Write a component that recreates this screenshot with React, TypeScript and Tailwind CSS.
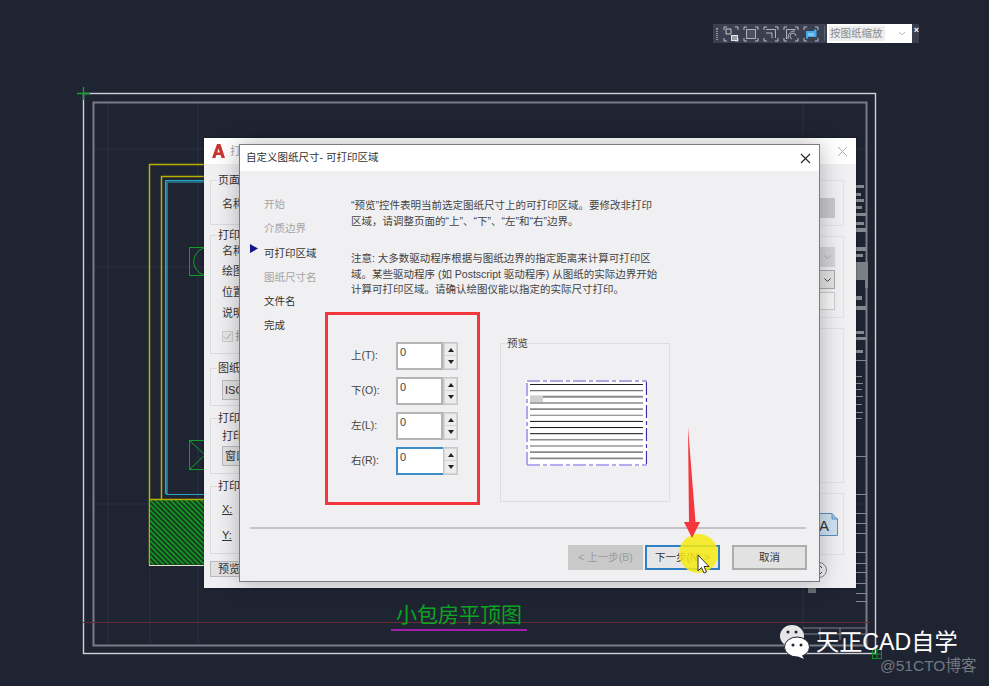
import React from "react";

const NAV = [
  { label: "开始", on: false },
  { label: "介质边界", on: false },
  { label: "可打印区域", on: true, current: true },
  { label: "图纸尺寸名", on: false },
  { label: "文件名", on: true },
  { label: "完成", on: true },
];

const SIDES = [
  { label: "上(T):", focus: false },
  { label: "下(O):", focus: false },
  { label: "左(L):", focus: false },
  { label: "右(R):", focus: true },
];

const PREVIEW_LINES = [
  ["#222", 1], ["#777", 1.4], ["#888", 2], ["#888", 1.6], ["#888", 1.6], ["#777", 1.2], ["#111", 1],
  ["#111", 1], ["#111", 1], ["#555", 1], ["#666", 1.2], ["#888", 1.6], ["#888", 1.8],
] as const;

// bars and ticks on the right hand side of the title block
const SIDE_BARS = [
  [185, 8, 3], [193, 5, 3], [199, 8, 3], [206, 6, 3], [213, 10, 3], [222, 8, 3], [228, 10, 4], [247, 10, 4],
  [254, 7, 3], [296, 6, 4], [306, 10, 4], [331, 8, 3], [337, 10, 3], [350, 7, 3], [360, 10, 1], [376, 6, 1],
  [383, 7, 1], [389, 6, 1], [396, 7, 1], [404, 6, 1], [412, 7, 1], [418, 6, 1], [456, 10, 1], [494, 10, 1],
  [513, 10, 1], [523, 10, 1], [533, 10, 1], [552, 10, 1], [563, 10, 1], [572, 10, 1], [583, 10, 1], [593, 10, 1],
  [601, 10, 1],
];

function CadDrawing() {
  return (
    <svg className="absolute inset-0" width={989} height={686} viewBox="0 0 989 686" fill="none">
      <defs>
        <pattern id="hatch" width="3.6" height="3.6" patternUnits="userSpaceOnUse" patternTransform="rotate(-45)">
          <rect width="3.6" height="3.6" fill="#1a3a22" />
          <rect width="1.8" height="3.6" fill="#119422" />
        </pattern>
      </defs>
      {/* faint grid */}
      <g stroke="#2a3040" strokeWidth="1">
        <path d="M94 149H866M94 267H866M94 504H866" />
        <path d="M198 102V646M108 102V646M150 570V646M803 102V646" />
      </g>
      {/* frames */}
      <rect x="83.5" y="93.5" width="792" height="560" stroke="#cfd1d6" strokeWidth="1.4" />
      <rect x="93.5" y="102.5" width="773" height="543" stroke="#7a7d85" strokeWidth="2" />
      <path d="M83 622.5H870" stroke="#6a2a30" />
      <path d="M77 93.5H90M83.5 87V100" stroke="#12a328" strokeWidth="1.3" />
      {/* rooms */}
      <path d="M149.5 565V164.5H300M161.5 499V176.5H300" stroke="#b8b000" strokeWidth="1.5" />
      <path d="M165.5 494V180.5H300M167 494V182H300M166 494.5H300" stroke="#2aa7c4" strokeWidth="1.2" />
      <rect x="150" y="499.5" width="60" height="65" fill="url(#hatch)" />
      <path d="M149.5 499.5H210" stroke="#b8b000" strokeWidth="1.4" />
      <path d="M149 565.5H210" stroke="#e6e6c8" strokeWidth="1" />
      <rect x="189.5" y="247.5" width="30" height="28" stroke="#0f9f24" />
      <path d="M204 248a14 14 0 0 0 0 27" stroke="#0fa526" />
      <rect x="189.5" y="440.5" width="30" height="29" stroke="#0f9f24" />
      <path d="M190 441l15 14-15 14" stroke="#0fa526" />
      {/* title block on the right */}
      <g fill="#85888f">
        {SIDE_BARS.map(([y, w, h]) => (
          <rect key={y} x="856" y={y} width={w} height={h} />
        ))}
      </g>
      <rect x="856" y="262" width="12" height="26" fill="#7d7f86" />
      <rect x="856" y="280" width="9" height="8" fill="#1f2433" />
      <path d="M803 628H866M803 634H866M820 628V640M840 628V640" stroke="#7f828a" />
      <rect x="808" y="588" width="8" height="5" fill="#6a6c73" />
      <rect x="872.5" y="649.5" width="9" height="9" stroke="#0f8f22" />
      <path d="M877 650V658M873 654H881" stroke="#0f8f22" />
    </svg>
  );
}

function ZoomIcon({ children }: { children: React.ReactNode }) {
  return (
    <svg width="16" height="16" viewBox="0 0 16 16" fill="none" className="shrink-0">
      <path d="M1 4V1H4M12 1H15V4M15 12V15H12M4 15H1V12" stroke="#b9bcc4" />
      {children}
    </svg>
  );
}

function Toolbar() {
  return (
    <div className="absolute left-[713px] top-[24px] flex h-[19px] w-[206px] items-center bg-[#3a4050]">
      <div className="ml-[3px] mr-[5px] h-[12px] w-[2px] border-x border-dotted border-[#8d909a]" />
      <div className="flex items-center gap-[4px]">
        <ZoomIcon>
          <path d="M3 3H8V8H3Z" stroke="#c6c8ce" />
          <rect x="8" y="9" width="7" height="6" fill="#e4e5e8" />
          <path d="M9 11H14M9 13H14" stroke="#555" />
        </ZoomIcon>
        <ZoomIcon>
          <rect x="3.5" y="3.5" width="9" height="9" stroke="#aeb1b9" fill="#4a505f" />
        </ZoomIcon>
        <ZoomIcon>
          <path d="M3 3.5H12.5V12M3 7H9V12" stroke="#b0b3bb" />
        </ZoomIcon>
        <ZoomIcon>
          <path d="M3.5 13V3.5H12.5M12 5C7 5 5 8 5 13M9 13a3 3 0 1 1 4-3" stroke="#b0b3bb" />
        </ZoomIcon>
        <ZoomIcon>
          <path d="M3 5H11V3.5H13.5V11H5V12.5H3Z" fill="#4aa8e8" />
          <path d="M5 7H11V10H5Z" fill="#7cc7f5" />
        </ZoomIcon>
      </div>
      <div className="ml-[5px] h-[15px] w-px bg-[#5c6170]" />
      <div className="ml-[2px] flex h-[19px] w-[86px] items-center justify-between bg-white pl-[2px] pr-[6px]">
        <span className="bg-[#eeeeee] pl-[1px] pr-[3px] text-[10.5px] leading-[15px] text-[#8b8b8b]">按图纸缩放</span>
        <svg width="8" height="5" viewBox="0 0 8 5" fill="none">
          <path d="M1 1l3 3 3-3" stroke="#b5b5b5" />
        </svg>
      </div>
      <span className="ml-[2px] -mt-[6px] text-[9px] font-bold leading-none text-white">×</span>
    </div>
  );
}

function GroupBox({ title, className, children }: { title: string; className: string; children?: React.ReactNode }) {
  return (
    <div className={`relative border border-[#dcdcdf] ${className}`}>
      <span className="absolute -top-[8px] left-[6px] bg-[#f0eff2] px-px text-[11px] leading-[14px] text-[#333]">{title}</span>
      {children}
    </div>
  );
}

function PlotDialog() {
  return (
    <div className="absolute left-[204px] top-[138px] flex h-[450px] w-[652px] flex-col bg-[#f0eff2] shadow-[0_0_2px_rgba(0,0,0,0.5)]">
      <div className="flex h-[26px] shrink-0 items-center justify-between bg-white pl-[8px] pr-[8px]">
        <div className="flex items-center gap-[5px]">
          <svg width="13" height="14" viewBox="0 0 13 14">
            <path d="M0 14L5 0H8.5L13 14H9.5L8.6 11H4.4L3.4 14ZM5.3 8.4H7.8L6.6 4.4Z" fill="#c8372f" />
          </svg>
          <span className="text-[11px] text-[#aaa]">打</span>
        </div>
        <svg width="11" height="11" viewBox="0 0 11 11" fill="none">
          <path d="M1 1l9 9M10 1l-9 9" stroke="#aaa" />
        </svg>
      </div>
      <div className="flex justify-between pl-[6px] pr-[12px] pt-[16px] text-[11px] text-[#333]">
        <div className="flex w-[300px] flex-col">
          <GroupBox title="页面" className="h-[45px] pl-[11px] pt-[15px]">
            名称
          </GroupBox>
          <GroupBox title="打印" className="mt-[10px] h-[119px] pl-[11px] pt-[8px] leading-[21px]">
            <div className="leading-[14px]">名称</div>
            <div className="mt-[3px]">绘图</div>
            <div>位置</div>
            <div>说明</div>
            <div className="mt-[2px] flex items-center gap-[2px] text-[#999]">
              <span className="flex h-[11px] w-[11px] items-center justify-center border border-[#ccc] bg-[#e8e8e8]">
                <svg width="9" height="9" viewBox="0 0 9 9" fill="none">
                  <path d="M1 4.5l2.5 2.5L8 1.5" stroke="#aaa" />
                </svg>
              </span>
              打
            </div>
          </GroupBox>
          <GroupBox title="图纸" className="mt-[14px] h-[38px] pl-[11px] pt-[11px]">
            <div className="h-[20px] border border-[#bbb] bg-[#e2e2e2] pl-[2px] leading-[18px]">ISO</div>
          </GroupBox>
          <GroupBox title="打印" className="mt-[12px] h-[56px] pl-[11px]">
            <div className="pt-[10px] leading-[14px]">打印</div>
            <div className="mt-[3px] h-[20px] border border-[#bbb] bg-[#e2e2e2] pl-[2px] leading-[18px]">窗口</div>
          </GroupBox>
          <GroupBox title="打印" className="mt-[12px] h-[68px] pl-[11px] pt-[14px]">
            <div className="underline">X:</div>
            <div className="mt-[9px] underline">Y:</div>
          </GroupBox>
          <div className="mt-[7px] h-[16px] w-[50px] whitespace-nowrap border border-[#bbb] bg-[#e2e2e2] pl-[7px] leading-[14px]">预览</div>
        </div>
        <div className="flex w-[324px] flex-col">
          <div className="flex h-[46px] justify-end border border-[#e2e2e5] pr-[8px] pt-[17px]">
            <div className="h-[20px] w-[15px] bg-[#c9c9cb]" />
          </div>
          <div className="mt-[10px] flex h-[82px] flex-col items-end gap-[3px] border border-[#e2e2e5] pr-[8px] pt-[10px]">
            <div className="flex h-[20px] w-[16px] items-center justify-center bg-[#d4d4d6]">
              <svg width="7" height="4" viewBox="0 0 7 4" fill="none">
                <path d="M0.5 0.5l3 3 3-3" stroke="#aaa" />
              </svg>
            </div>
            <div className="flex h-[19px] w-[16px] items-center justify-center border border-[#aaa] bg-[#e2e2e2]">
              <svg width="7" height="4" viewBox="0 0 7 4" fill="none">
                <path d="M0.5 0.5l3 3 3-3" stroke="#444" />
              </svg>
            </div>
            <div className="h-[18px] w-[16px] border border-[#ccc] bg-[#f6f6f6]" />
          </div>
          <div className="mt-[10px] h-[155px] border border-[#e2e2e5]" />
          <div className="mt-[10px] flex h-[62px] items-center justify-end border border-[#e2e2e5] pr-[5px]">
            <svg width="19" height="23" viewBox="0 0 19 23">
              <path d="M0.5 0.5H13L18.5 6V22.5H0.5Z" fill="#cfe2f2" stroke="#5c8fbd" />
              <path d="M13 0.5V6H18.5" fill="#9fc3e0" stroke="#5c8fbd" />
              <text x="0" y="18" fontSize="15" fill="#333">A</text>
            </svg>
          </div>
          <div className="mt-[6px] flex justify-end pr-[16px]">
            <svg width="18" height="18" viewBox="0 0 18 18" fill="none">
              <circle cx="9" cy="9" r="7.5" stroke="#888" />
              <path d="M6 7l3-3 3 3M6 11l3 3 3-3" stroke="#444" />
            </svg>
          </div>
        </div>
      </div>
    </div>
  );
}

function SpinRow({ label, focus }: { label: string; focus: boolean }) {
  return (
    <div className="flex h-[28px] items-center">
      <span className="w-[45px] text-[10.5px] text-[#444]">{label}</span>
      <div className="flex h-[28px]">
        <div
          className={`h-[28px] w-[47px] border-2 bg-white pl-[2px] text-[11px] leading-[16px] text-[#444] ${
            focus ? "border-[#3f8ccb] border-r-0" : "border-[#b4b4b4]"
          }`}
        >
          0
        </div>
        <div className="flex w-[15px] flex-col gap-px border border-[#c6c6c6] bg-[#d6d6d6] p-px">
          <div className="flex flex-1 items-center justify-center bg-[#ececec]">
            <svg width="6" height="4" viewBox="0 0 6 4">
              <path d="M3 0L6 4H0Z" fill="#222" />
            </svg>
          </div>
          <div className="flex flex-1 items-center justify-center bg-[#ececec]">
            <svg width="6" height="4" viewBox="0 0 6 4">
              <path d="M0 0H6L3 4Z" fill="#222" />
            </svg>
          </div>
        </div>
      </div>
    </div>
  );
}

function PagePreview() {
  return (
    <svg width="122" height="86" viewBox="0 0 122 86" fill="none">
      <rect width="122" height="86" fill="#ffffff" />
      <path d="M1 1H121" stroke="#5b4fc4" strokeWidth="1.2" strokeDasharray="13 3 4 3" />
      <path d="M120.5 2V85" stroke="#3a2ca8" strokeWidth="1.2" strokeDasharray="13 3 4 3" />
      <path d="M1 85H121" stroke="#9c92ea" strokeWidth="1.6" strokeDasharray="13 3 4 3" />
      <path d="M1 3V85" stroke="#9c92ea" strokeWidth="1.6" strokeDasharray="13 3 4 3" />
      {PREVIEW_LINES.map(([color, width], i) => (
        <line key={i} x1="4" x2="117" y1={4.5 + i * 6.15} y2={4.5 + i * 6.15} stroke={color} strokeWidth={width} />
      ))}
      <rect x="4" y="16" width="13" height="6" fill="#cfcfcf" />
    </svg>
  );
}

function PrintableAreaDialog() {
  return (
    <div className="absolute left-[239px] top-[144px] flex h-[438px] w-[581px] flex-col border border-[#7c7c7c] bg-[#f0eff2] shadow-[0_0_22px_rgba(0,0,0,0.28)]">
      <div className="flex h-[26px] shrink-0 items-center justify-between bg-white pl-[6px] pr-[8px]">
        <span className="text-[10.5px] text-[#333]">自定义图纸尺寸- 可打印区域</span>
        <svg width="11" height="11" viewBox="0 0 11 11" fill="none">
          <path d="M1 1l9 9M10 1l-9 9" stroke="#222" strokeWidth="1.1" />
        </svg>
      </div>
      <div className="flex flex-1">
        <ul className="w-[85px] shrink-0 pl-[24px] pt-[21px] text-[10.5px] leading-[24.3px]">
          {NAV.map((item) => (
            <li key={item.label} className={`relative whitespace-nowrap ${item.on ? "text-[#333]" : "text-[#a5a5a5]"}`}>
              {item.current && (
                <svg className="absolute -left-[14px] top-[3px]" width="8" height="9" viewBox="0 0 8 9">
                  <path d="M0 0L8 4.5L0 9Z" fill="#14148c" />
                </svg>
              )}
              {item.label}
            </li>
          ))}
        </ul>
        <div className="flex flex-col">
          <div className="pl-[26px] pt-[27px] text-[10.5px] leading-[15.6px] text-[#444]">
            <p className="whitespace-nowrap">“预览”控件表明当前选定图纸尺寸上的可打印区域。要修改非打印</p>
            <p className="whitespace-nowrap">区域，请调整页面的“上”、“下”、“左”和“右”边界。</p>
            <p className="mt-[22px] whitespace-nowrap">注意: 大多数驱动程序根据与图纸边界的指定距离来计算可打印区</p>
            <p className="whitespace-nowrap">域。某些驱动程序 (如 Postscript 驱动程序) 从图纸的实际边界开始</p>
            <p className="whitespace-nowrap">计算可打印区域。请确认绘图仪能以指定的实际尺寸打印。</p>
          </div>
          <div className="mt-[14px] flex items-start">
            <div className="flex h-[193px] w-[155px] flex-col gap-[7px] border-[3px] border-[#f5363c] pl-[23px] pt-[27px]">
              {SIDES.map((side) => (
                <SpinRow key={side.label} label={side.label} focus={side.focus} />
              ))}
            </div>
            <div className="relative ml-[20px] mt-[31px] flex h-[159px] w-[170px] border border-[#dedee0] pl-[25px] pt-[36px]">
              <span className="absolute -top-[8px] left-[6px] text-[10.5px] leading-[14px] text-[#444]">预览</span>
              <PagePreview />
            </div>
          </div>
        </div>
      </div>
      <div className="ml-[10px] mr-[13px] h-[2px] bg-[#c4c4c6]" />
      <div className="flex h-[52px] shrink-0 justify-end gap-[2px] pr-[12px] pt-[16px] text-[10.5px]">
        <div className="flex h-[25px] w-[75px] items-center justify-center bg-[#c9c9c9] text-[#9a9a9a]">&lt; 上一步(B)</div>
        <div className="flex h-[25px] w-[75px] items-center justify-center border-2 border-[#2f7fc4] bg-[#e6e6e8] text-[#333]">下一步(N) &gt;</div>
        <div className="ml-[10px] flex h-[25px] w-[75px] items-center justify-center border-2 border-[#adadad] bg-[#e2e2e2] text-[#333]">取消</div>
      </div>
    </div>
  );
}

function WeChatLogo() {
  return (
    <svg className="absolute left-[780px] top-[624px]" width="38" height="36" viewBox="0 0 38 36">
      <ellipse cx="12" cy="12" rx="12" ry="11" fill="#e6e6e6" />
      <path d="M5 19l-1 6 7-3Z" fill="#e6e6e6" />
      <circle cx="8" cy="8" r="1.5" fill="#1f2433" />
      <circle cx="16" cy="8" r="1.5" fill="#1f2433" />
      <ellipse cx="17" cy="23" rx="12.5" ry="10" fill="#ffffff" stroke="#1f2433" strokeWidth="1" />
      <path d="M21 30l3 5-7-3Z" fill="#ffffff" />
      <circle cx="13" cy="21" r="1.5" fill="#1f2433" />
      <circle cx="21" cy="21" r="1.5" fill="#1f2433" />
    </svg>
  );
}

export default function App() {
  return (
    <div className="relative h-[686px] w-[989px] overflow-hidden bg-[#1f2433] [font-family:'Liberation_Sans','Noto_Sans_CJK_SC',sans-serif]">
      <CadDrawing />
      <Toolbar />
      <PlotDialog />
      <PrintableAreaDialog />

      {/* highlighted mouse pointer and the red arrow on top of the dialog */}
      <div className="absolute left-[679px] top-[534px] h-[39px] w-[39px] rounded-full bg-[#f7ea12]/85" />
      <svg className="absolute left-[680px] top-[425px]" width="34" height="150" viewBox="0 0 34 150">
        <path d="M8 2L9 97H4L12 113L20 97H15.5Z" fill="#f5363c" />
        <path d="M18 130V146L21.5 142.5L24 148L26.5 147L24 141.5H29Z" fill="#ffffff" stroke="#333" strokeWidth="1" />
      </svg>

      <span className="absolute left-[396px] top-[602px] text-[21px] leading-[26px] text-[#0aa51f]">小包房平顶图</span>
      <div className="absolute left-[391px] top-[629px] h-[2px] w-[136px] bg-[#a11fa8]" />

      <WeChatLogo />
      <span className="absolute left-[816px] top-[627px] text-[23.2px] leading-[30px] text-white">天正CAD自学</span>
      <span className="absolute left-[880px] top-[657px] text-[15.5px] leading-[18px] text-[#74777f]">@51CTO博客</span>
    </div>
  );
}
